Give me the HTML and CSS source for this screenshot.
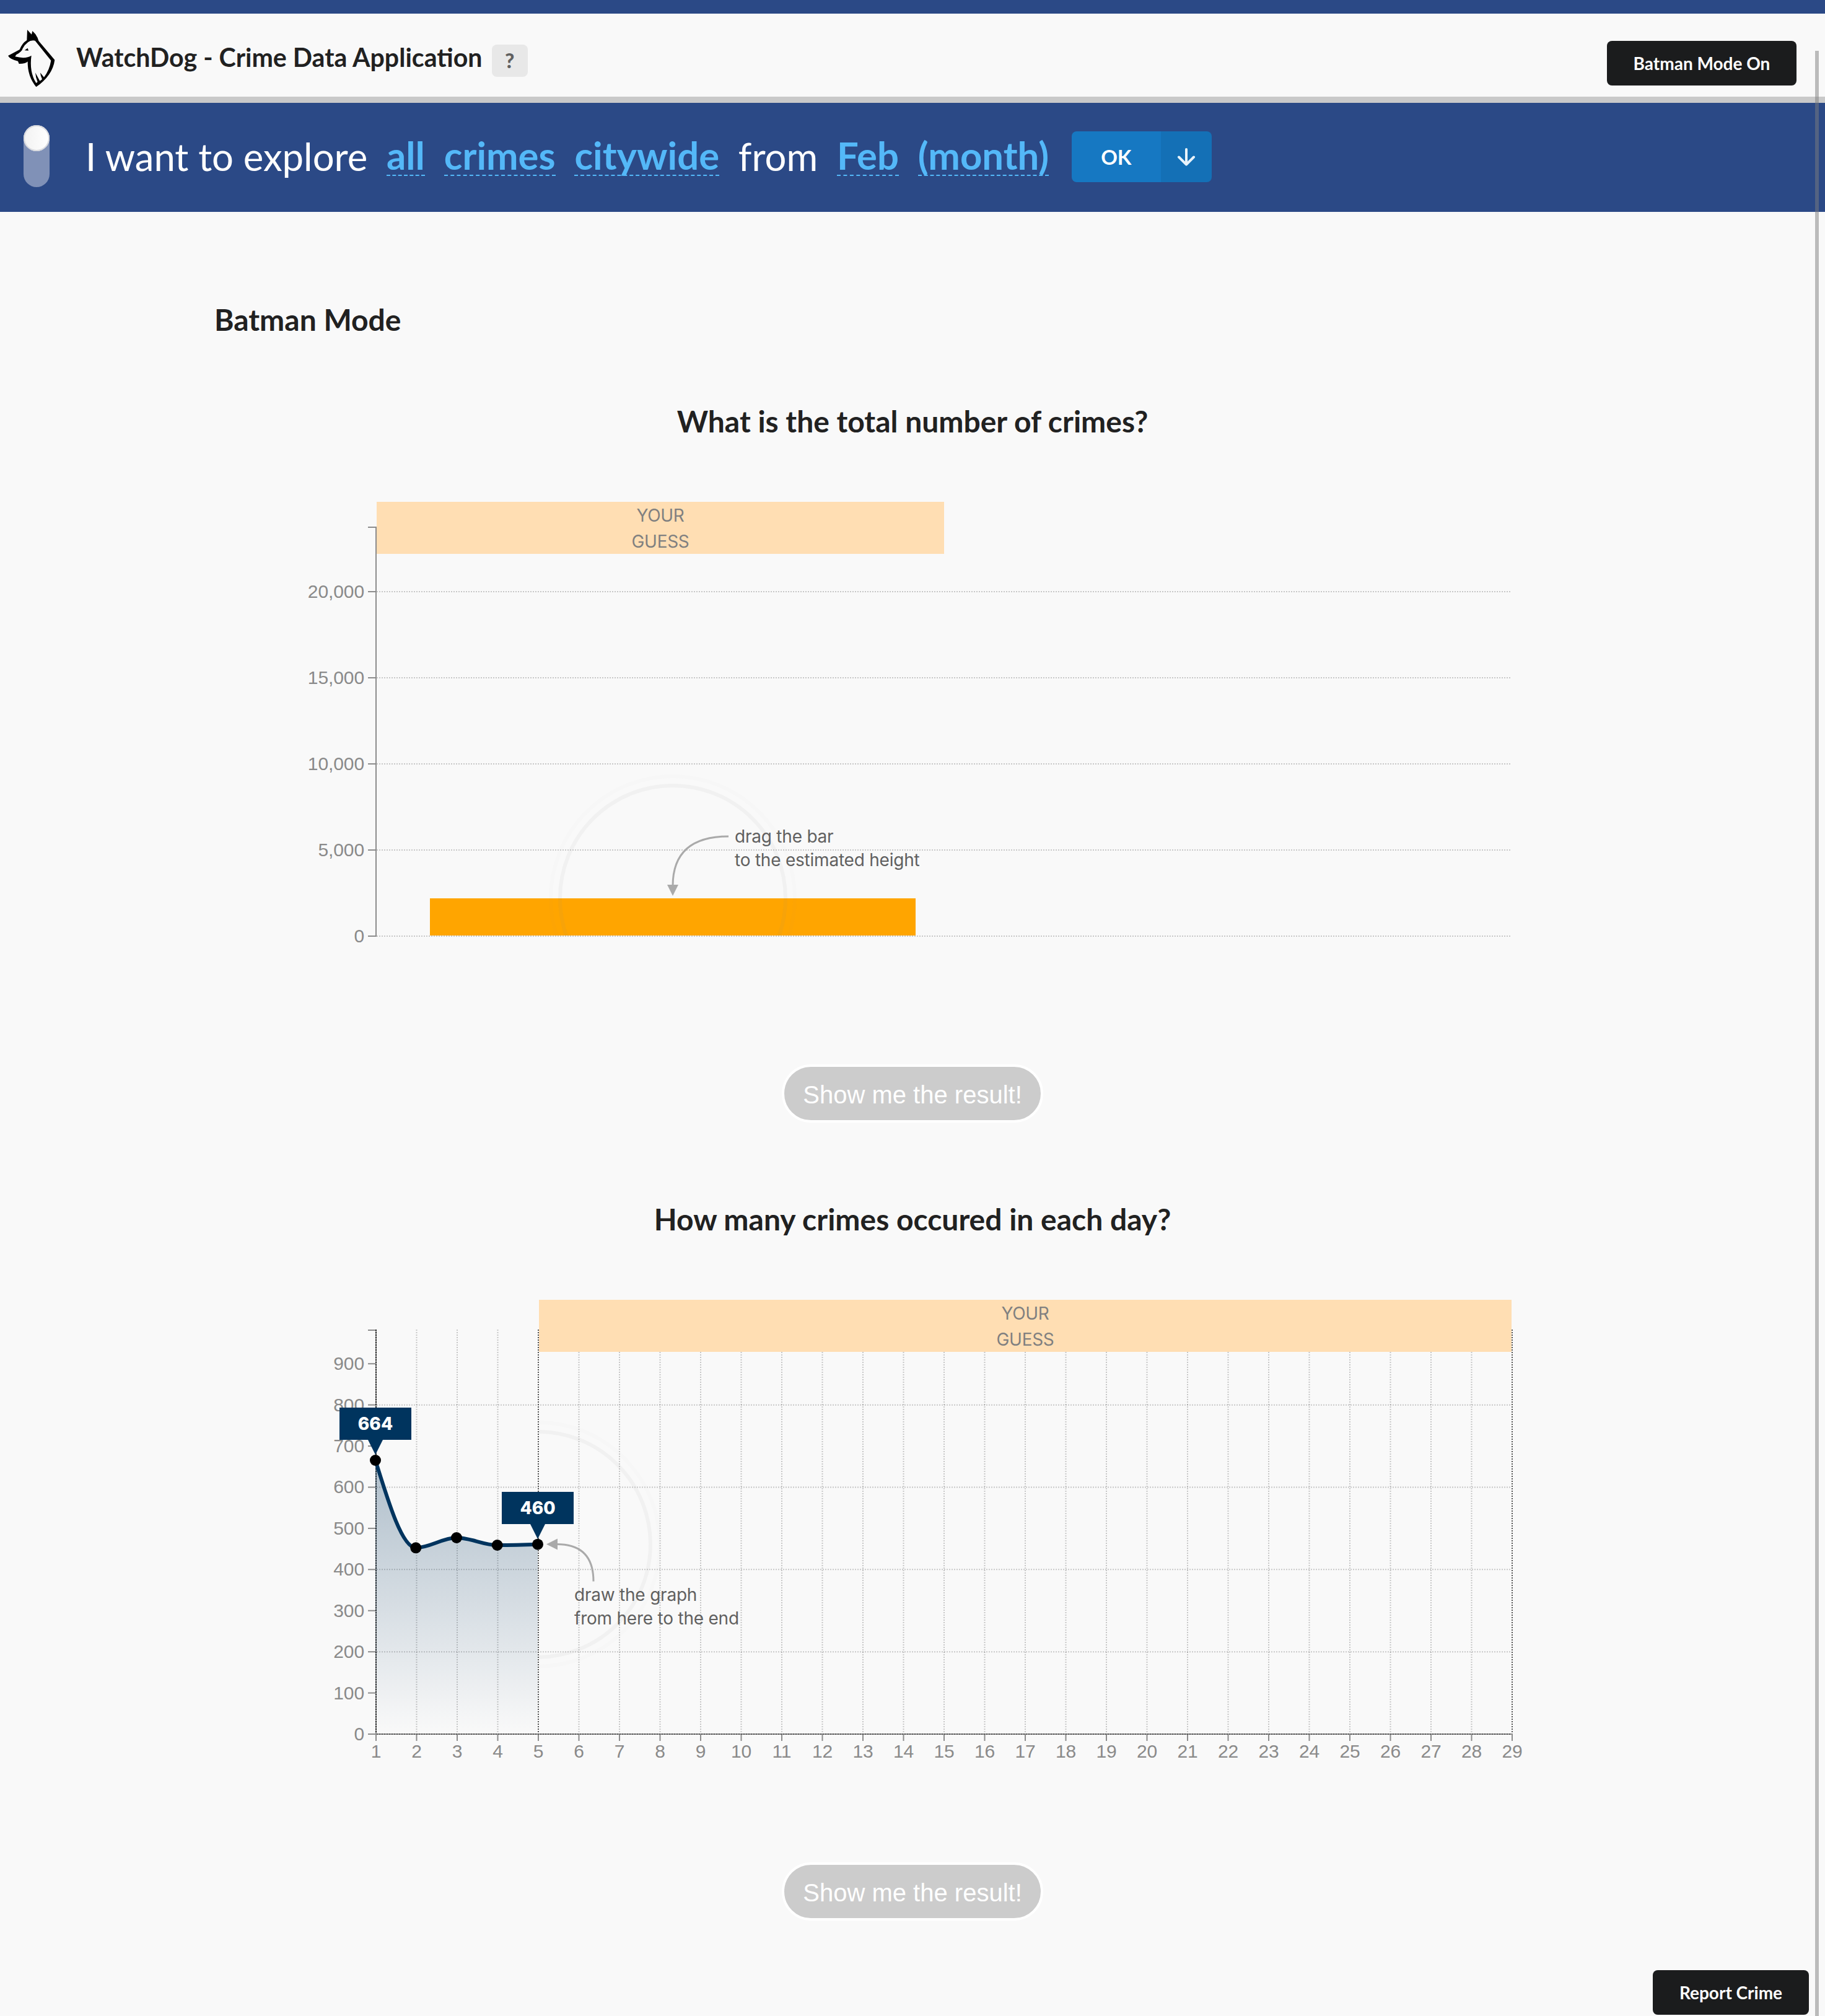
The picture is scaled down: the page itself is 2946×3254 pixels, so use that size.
FILE: index.html
```html
<!DOCTYPE html>
<html lang="en">
<head>
<meta charset="utf-8">
<title>WatchDog - Crime Data Application</title>
<link rel="stylesheet" href="styles.css">
</head>
<body>
<header class="header">
  <svg class="logo" viewBox="0 0 360 360" aria-label="WatchDog">
    <path fill-rule="evenodd" d="M132 54L153 77L157 60L172 76Q183 92 187 108L265 200Q255 275 175 331Q133 280 134 208Q126 219 92 219L87 206Q48 197 39 180L95 150Q108 118 130 105ZM170 107Q135 100 110 145Q106 161 79 175L73 184Q125 197 152 179Q141 258 175 312L182 307Q173 285 171 262L193 302L204 294Q196 277 195 262L213 284Q240 248 247 203Z"/>
    <path d="M119 154L134 143L138 155Z"/>
  </svg>
  <h1 class="title">WatchDog - Crime Data Application</h1>
  <button class="help">?</button>
  <button class="btn-dark batman">Batman Mode On</button>
</header>
<nav class="query">
  <div class="toggle"><div class="knob"></div></div>
  <div class="sentence">
    <span class="plain">I want to explore</span>
    <a class="pick">all</a>
    <a class="pick">crimes</a>
    <a class="pick">citywide</a>
    <span class="plain">from</span>
    <a class="pick">Feb</a>
    <a class="pick">(month)</a>
  </div>
  <div class="ok-group">
    <button class="ok">OK</button>
    <button class="ok-more"><svg width="30" height="30" viewBox="0 0 30 30"><path d="M15 3V27M3 15.500L15 27.500L27 15.500"/></svg></button>
  </div>
</nav>
<main class="main">
  <h2 class="mode">Batman Mode</h2>
  <section class="question">
    <h2>What is the total number of crimes?</h2>
    <svg class="chart" id="total" viewBox="0 780 2946 820"></svg>
    <button class="show">Show me the result!</button>
  </section>
  <section class="question">
    <h2>How many crimes occured in each day?</h2>
    <svg class="chart" id="daily" viewBox="0 2068 2946 820"></svg>
    <button class="show">Show me the result!</button>
  </section>
</main>
<button class="btn-dark report">Report Crime</button>
<div class="scrollbar"></div>
<script src="charts.js"></script>
</body>
</html>
```
FILE: styles.css
```css
* { box-sizing: border-box; }

body {
  margin: 0;
  min-height: 3254px;
  background: #f9f9f9;
  border-top: 22px solid #2b4986;
  color: #212121;
  font-family: Lato, sans-serif;
  overflow: hidden;
}

button {
  border: 0;
  padding: 0;
  font-family: inherit;
  font-weight: 700;
}

h1, h2 { margin: 0; font-weight: 700; }

.header {
  display: flex;
  align-items: flex-start;
  height: 144px;
  padding-right: 46px;
  border-bottom: 10px solid #c9c9c9;
}
.logo { width: 120px; height: 120px; margin-top: 8px; }
.title { margin: 42px 0 0 3px; font-size: 41.14px; line-height: 56px; white-space: nowrap; }
.help {
  width: 58px;
  height: 52px;
  margin: 50px 0 0 15px;
  padding-bottom: 2px;
  border-radius: 8px;
  background: #e8e8e8;
  color: #606060;
  font-size: 33px;
  font-weight: 900;
}
.btn-dark {
  height: 72px;
  border-radius: 8px;
  background: #1b1c1d;
  color: #fff;
  font-size: 28px;
}
.batman { width: 306px; margin: 44px 0 0 auto; }

.query { display: flex; height: 176px; background: #2b4986; color: #fff; }
.toggle { width: 42px; height: 100px; margin: 36px 0 0 38px; border-radius: 21px; background: #8091b7; }
.knob {
  width: 42px;
  height: 42px;
  border-radius: 50%;
  background: linear-gradient(90deg, #f2f2f2, #fff);
  box-shadow: inset 0 0 0 2px #d9dade;
}
.sentence {
  display: flex;
  align-items: flex-start;
  gap: 30.8px;
  margin-left: 58px;
  font-size: 61.6px;
  line-height: 72px;
  white-space: nowrap;
}
.plain { margin-top: 50px; }
.pick { height: 70px; margin-top: 48px; border-bottom: 2px dashed #54b8f8; color: #54b8f8; font-weight: 700; }
.ok-group { display: flex; height: 82px; margin: 46px 0 0 36.7px; border-radius: 8px; overflow: hidden; }
.ok, .ok-more { color: #fff; background: #1678c2; font-size: 33px; }
.ok { width: 144px; }
.ok-more { width: 82px; background: #1470b6; display: flex; align-items: center; justify-content: center; }
.ok-more path { fill: none; stroke: #e8f3fb; stroke-width: 4; stroke-linejoin: round; stroke-linecap: round; }

.main { padding-top: 143px; }
h2 { font-size: 48px; line-height: 62px; }
.mode { padding-left: 346px; margin-bottom: 102px; }
.question { display: flex; flex-direction: column; align-items: center; margin-bottom: 125px; }
.chart { display: block; width: 2946px; height: 820px; margin: 69px 0 118px; }
.show {
  width: 422px;
  height: 94px;
  padding-top: 5px;
  border: 4px solid #fff;
  border-radius: 47px;
  background: #ccc;
  color: #fff;
  font: 40px "Liberation Sans", Arial, sans-serif;
}

.report { position: absolute; left: 2668px; top: 3180px; width: 252px; }
.scrollbar { position: absolute; left: 2930px; top: 82px; width: 6px; height: 3172px; background: rgba(125, 125, 125, .5); }

.axis { stroke: #8c8c8c; stroke-width: 2; }
.grid { stroke: #000; stroke-opacity: .2; stroke-width: 2; stroke-dasharray: 2 2; }
.bound { stroke: #555; stroke-width: 2; stroke-dasharray: 2 2; }
.start { stroke: #222; stroke-width: 2; stroke-dasharray: 2 2; }
.tick-label { fill: #8a8a8a; font: 30px "Liberation Sans", Arial, sans-serif; letter-spacing: -.1px; }
.band { fill: #ffdeb3; }
.band-label { fill: #808080; font: 28px Inter, sans-serif; letter-spacing: -.3px; text-anchor: middle; }
.hint { fill: #606060; font: 28px Inter, sans-serif; letter-spacing: -.22px; }
.bar { fill: #ffa500; }
.line { fill: none; stroke: #00345e; stroke-width: 6; }
.tip { fill: #00345e; }
.tip-label { fill: #fff; font: 800 28px Inter, sans-serif; text-anchor: middle; }
.ring-inner { fill: none; stroke: #808080; stroke-opacity: .065; stroke-width: 6; }
.ring-outer { fill: none; stroke: #808080; stroke-opacity: .018; stroke-width: 6; }
.arrow { fill: none; stroke: #aaa; stroke-width: 3; }
.arrow-head { fill: #aaa; }
```
FILE: charts.js
```js
const line = (cls, x1, y1, x2, y2) =>
  `<line class="${cls}" x1="${x1}" y1="${y1}" x2="${x2}" y2="${y2}"/>`;
const label = (cls, x, y, text, anchor) =>
  `<text class="${cls}" x="${x}" y="${y}"${anchor ? ` text-anchor="${anchor}"` : ''}>${text}</text>`;
const rings = (x, y, clip) =>
  `<g clip-path="url(#${clip})"><circle class="ring-inner" cx="${x}" cy="${y}" r="182"/>` +
  `<circle class="ring-outer" cx="${x}" cy="${y}" r="197"/></g>`;
const band = (x1, x2, y) =>
  `<rect class="band" x="${x1}" y="${y}" width="${x2 - x1}" height="84"/>` +
  label('band-label', (x1 + x2) / 2, y + 32, 'YOUR') +
  label('band-label', (x1 + x2) / 2, y + 74, 'GUESS');

/* Total number of crimes: draggable bar */
let out = '<clipPath id="c1"><rect x="608" y="780" width="1832" height="730"/></clipPath>';
for (let v = 0; v <= 20000; v += 5000) {
  const y = 1511 - v / 5000 * 139;
  out += line('grid', 608, y, 2440, y) + line('axis', 594, y, 608, y) +
    label('tick-label', 588, y + 10, v.toLocaleString('en-US'), 'end');
}
out += line('axis', 607, 850, 607, 1512) + line('axis', 594, 851, 608, 851);
out += band(608, 1524, 810);
out += '<rect class="bar" x="694" y="1450" width="784" height="60"/>' + rings(1086, 1450, 'c1');
out += '<path class="arrow" d="M1176 1350Q1086 1350 1086 1430"/><path class="arrow-head" d="M1077 1428H1095L1086 1446Z"/>';
out += label('hint', 1186, 1360, 'drag the bar') + label('hint', 1186, 1398, 'to the estimated height');
document.getElementById('total').innerHTML = out;

/* Crimes per day: line to be continued by the reader */
const dx = d => 607 + (d - 1) * 65.5;
const dy = v => 2799 - v * 0.6642;
out = '<clipPath id="c2"><rect x="870" y="2068" width="1570" height="730"/></clipPath>' +
  '<linearGradient id="fade" x1="0" y1="0" x2="0" y2="1"><stop offset="0" stop-color="#00345e" stop-opacity=".3"/>' +
  '<stop offset="1" stop-color="#00345e" stop-opacity="0"/></linearGradient>';
for (let v = 200; v <= 800; v += 200) out += line('grid', 608, dy(v), 2440, dy(v));
for (let v = 0; v <= 900; v += 100) {
  out += line('axis', 594, dy(v), 608, dy(v)) + label('tick-label', 588, dy(v) + 10, v, 'end');
}
for (let d = 2; d <= 28; d++) if (d !== 5) out += line('grid', dx(d), 2146, dx(d), 2798);
for (let d = 1; d <= 29; d++) {
  out += line('axis', dx(d), 2798, dx(d), 2810) + label('tick-label', dx(d), 2837, d, 'middle');
}
out += line('axis', 607, 2146, 607, 2800) + line('axis', 594, 2147, 608, 2147) + line('axis', 594, 2799, 2442, 2799);
out += line('start', 607, 2146, 607, 2798) + line('bound', 869, 2146, 869, 2798) + line('bound', 2441, 2146, 2441, 2798);
out += line('bound', 608, 2799, 2440, 2799);
const pts = [[606, 2357], [671.300, 2498.300], [737, 2482], [802.700, 2494], [868, 2492.700]];
const curve = 'M606 2357C627.800 2427.700 649.500 2498.300 671.300 2498.300C693 2498.300 715 2482 737 2482' +
  'C759 2482 781 2494 802.700 2494C824 2494 846 2493.500 868 2492.700';
out += `<path d="${curve}V2798H606Z" fill="url(#fade)"/><path class="line" d="${curve}"/>`;
out += band(870, 2440, 2098) + rings(868, 2492.700, 'c2');
out += '<path class="arrow" d="M958 2552.500Q958 2492.500 899 2492.500"/><path class="arrow-head" d="M900 2483.500V2501.500L882 2492.500Z"/>';
out += label('hint', 927, 2583.500, 'draw the graph') + label('hint', 927, 2621.500, 'from here to the end');
for (const [x, y, v] of [[606, 2272, 664], [868, 2408, 460]]) {
  out += `<path class="tip" d="M${x - 58} ${y}h116v52h-46l-12 24l-12 -24h-46z"/>` + label('tip-label', x, y + 36, v);
}
for (const [x, y] of pts) out += `<circle cx="${x}" cy="${y}" r="9"/>`;
document.getElementById('daily').innerHTML = out;
```
